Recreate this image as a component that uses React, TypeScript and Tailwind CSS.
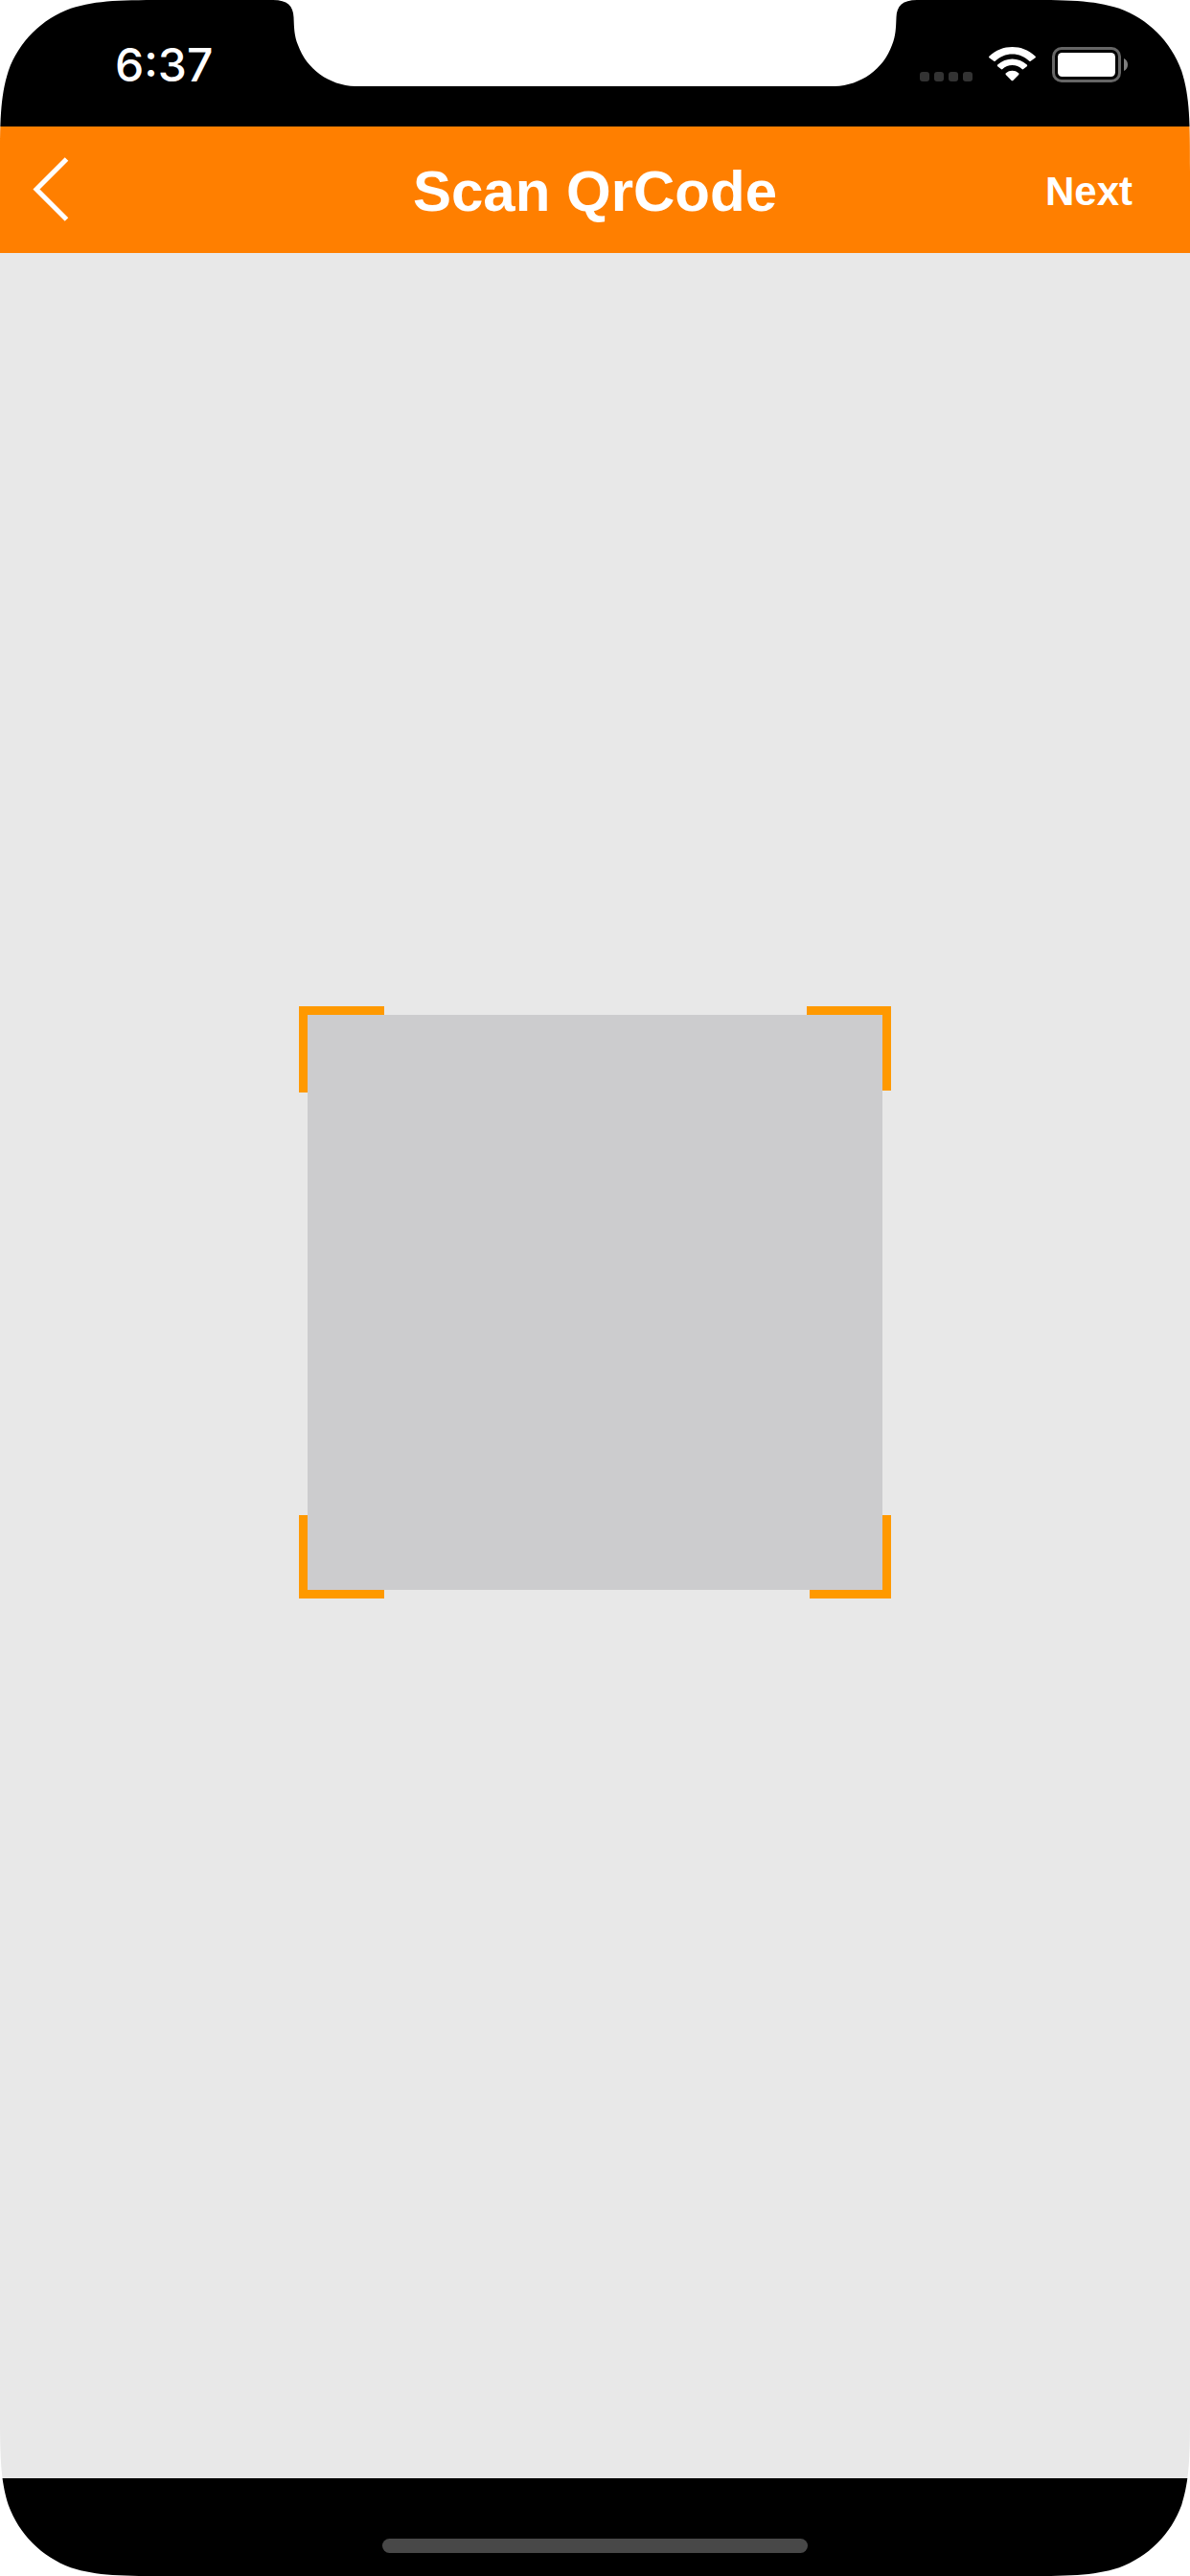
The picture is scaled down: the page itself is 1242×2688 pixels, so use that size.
import React from "react";

function ScreenCorner({ className }: { className: string }) {
  return (
    <svg
      aria-hidden="true"
      viewBox="0 0 179 179"
      className={`pointer-events-none absolute z-10 size-[179px] fill-white ${className}`}
    >
      <path d="M0 0H179C127.4 0 101.6 0 73.9 8.8C43.6 19.8 19.8 43.6 8.8 73.9C0 101.6 0 127.4 0 179Z" />
    </svg>
  );
}

function Notch() {
  return (
    <svg aria-hidden="true" viewBox="0 0 676 90" className="h-[90px] w-[676px] self-start fill-white">
      <path d="M2 0C17 0 23 6 23.5 18C24 30 24 37 28 47C37 72 60 89 88 90H588C616 89 639 72 648 47C652 37 652 30 652.5 18C653 6 659 0 674 0Z" />
    </svg>
  );
}

function WifiIcon() {
  return (
    <svg aria-hidden="true" viewBox="0 0 49 36" className="h-9 w-[49px] fill-white">
      <path d="M24.5 7.5C31.3 7.5 37.6 10.1 42.3 14.8C42.7 15.2 43.3 15.2 43.7 14.8L48.6 11.3C49 10.8 49 10.1 48.6 9.7C35.1-3.2 13.9-3.2.4 9.7C0 10.1 0 10.8.4 11.3L5.3 14.8C5.7 15.2 6.3 15.2 6.7 14.8C11.4 10.1 17.7 7.5 24.5 7.5Z" />
      <path d="M24.5 19C28.3 19 31.9 20.4 34.6 23C35.1 23.5 35.7 23.5 36.2 23L39.8 20.2C40.3 19.7 40.3 19 39.8 18.5C31.2 10.4 17.8 10.4 9.2 18.5C8.7 19 8.7 19.7 9.2 20.2L12.8 23C13.3 23.5 13.9 23.5 14.4 23C17.1 20.4 20.7 19 24.5 19Z" />
      <path d="M31.2 28.9C31.6 28.5 31.6 27.7 31.1 27.3C27.3 24 21.7 24 17.9 27.3C17.4 27.7 17.4 28.5 17.8 28.9L23.7 34.9C24.1 35.4 24.9 35.4 25.3 34.9Z" />
    </svg>
  );
}

function BatteryIcon() {
  return (
    <svg aria-hidden="true" viewBox="0 0 79 37" className="h-[37px] w-[79px]">
      <rect x="1.5" y="1.5" width="69" height="34" rx="8.5" fill="none" stroke="#666" strokeWidth="3" />
      <rect x="6" y="6" width="60" height="25" rx="4.5" fill="#fff" />
      <path d="M75 12C77.400 13 79 15.500 79 18.500S77.400 24 75 25Z" fill="#808080" />
    </svg>
  );
}

function StatusBar() {
  return (
    <div className="grid h-[132px] shrink-0 grid-cols-[1fr_676px_1fr] bg-black">
      <time className="pt-10 pl-[120px] font-['Inter',sans-serif] text-[48px] leading-[56px] font-medium text-white">
        6:37
      </time>
      <Notch />
      <div className="flex items-start justify-end pt-[49px] pr-[65px]">
        <div className="mt-[26px] mr-[17px] flex gap-[5px]">
          <span className="size-[10px] rounded-[3px] bg-[#333]" />
          <span className="size-[10px] rounded-[3px] bg-[#333]" />
          <span className="size-[10px] rounded-[3px] bg-[#333]" />
          <span className="size-[10px] rounded-[3px] bg-[#333]" />
        </div>
        <div className="mr-[17px]">
          <WifiIcon />
        </div>
        <BatteryIcon />
      </div>
    </div>
  );
}

function NavBar() {
  return (
    <header className="grid h-[132px] shrink-0 grid-cols-[1fr_auto_1fr] items-center bg-[#ff7f00] text-white">
      <button type="button" aria-label="Back" className="ml-[34px] justify-self-start">
        <svg aria-hidden="true" viewBox="0 0 40 68" className="h-[68px] w-10">
          <path d="M35.500 2L4 33.500L35.500 65" fill="none" stroke="currentColor" strokeWidth="5" />
        </svg>
      </button>
      <h1 className="pt-1 text-[60px] leading-[72px] font-bold">Scan QrCode</h1>
      <button type="button" className="mr-[60px] justify-self-end pt-1 text-[42px] leading-[48px] font-bold">
        Next
      </button>
    </header>
  );
}

function ScanFrame() {
  return (
    <div className="relative p-[9px]">
      <span className="absolute top-0 left-0 h-[90px] w-[89px] bg-[#ff9900]" />
      <span className="absolute top-0 right-0 h-[88px] w-[88px] bg-[#ff9900]" />
      <span className="absolute bottom-0 left-0 h-[87px] w-[89px] bg-[#ff9900]" />
      <span className="absolute right-0 bottom-0 h-[87px] w-[85px] bg-[#ff9900]" />
      <div className="relative size-[600px] bg-[#ccccce]" />
    </div>
  );
}

export default function App() {
  return (
    <div className="relative flex min-h-screen flex-col overflow-hidden bg-[#e8e8e8] font-['Liberation_Sans',Arial,sans-serif]">
      <StatusBar />
      <NavBar />
      <main className="flex flex-1 items-center justify-center pb-[132px]">
        <ScanFrame />
      </main>
      <footer className="flex h-[102px] shrink-0 items-end justify-center bg-black pb-6">
        <div className="h-[15px] w-[444px] rounded-full bg-[#484848]" />
      </footer>
      <ScreenCorner className="top-0 left-0" />
      <ScreenCorner className="top-0 right-0 rotate-90" />
      <ScreenCorner className="right-0 bottom-0 rotate-180" />
      <ScreenCorner className="bottom-0 left-0 -rotate-90" />
    </div>
  );
}
